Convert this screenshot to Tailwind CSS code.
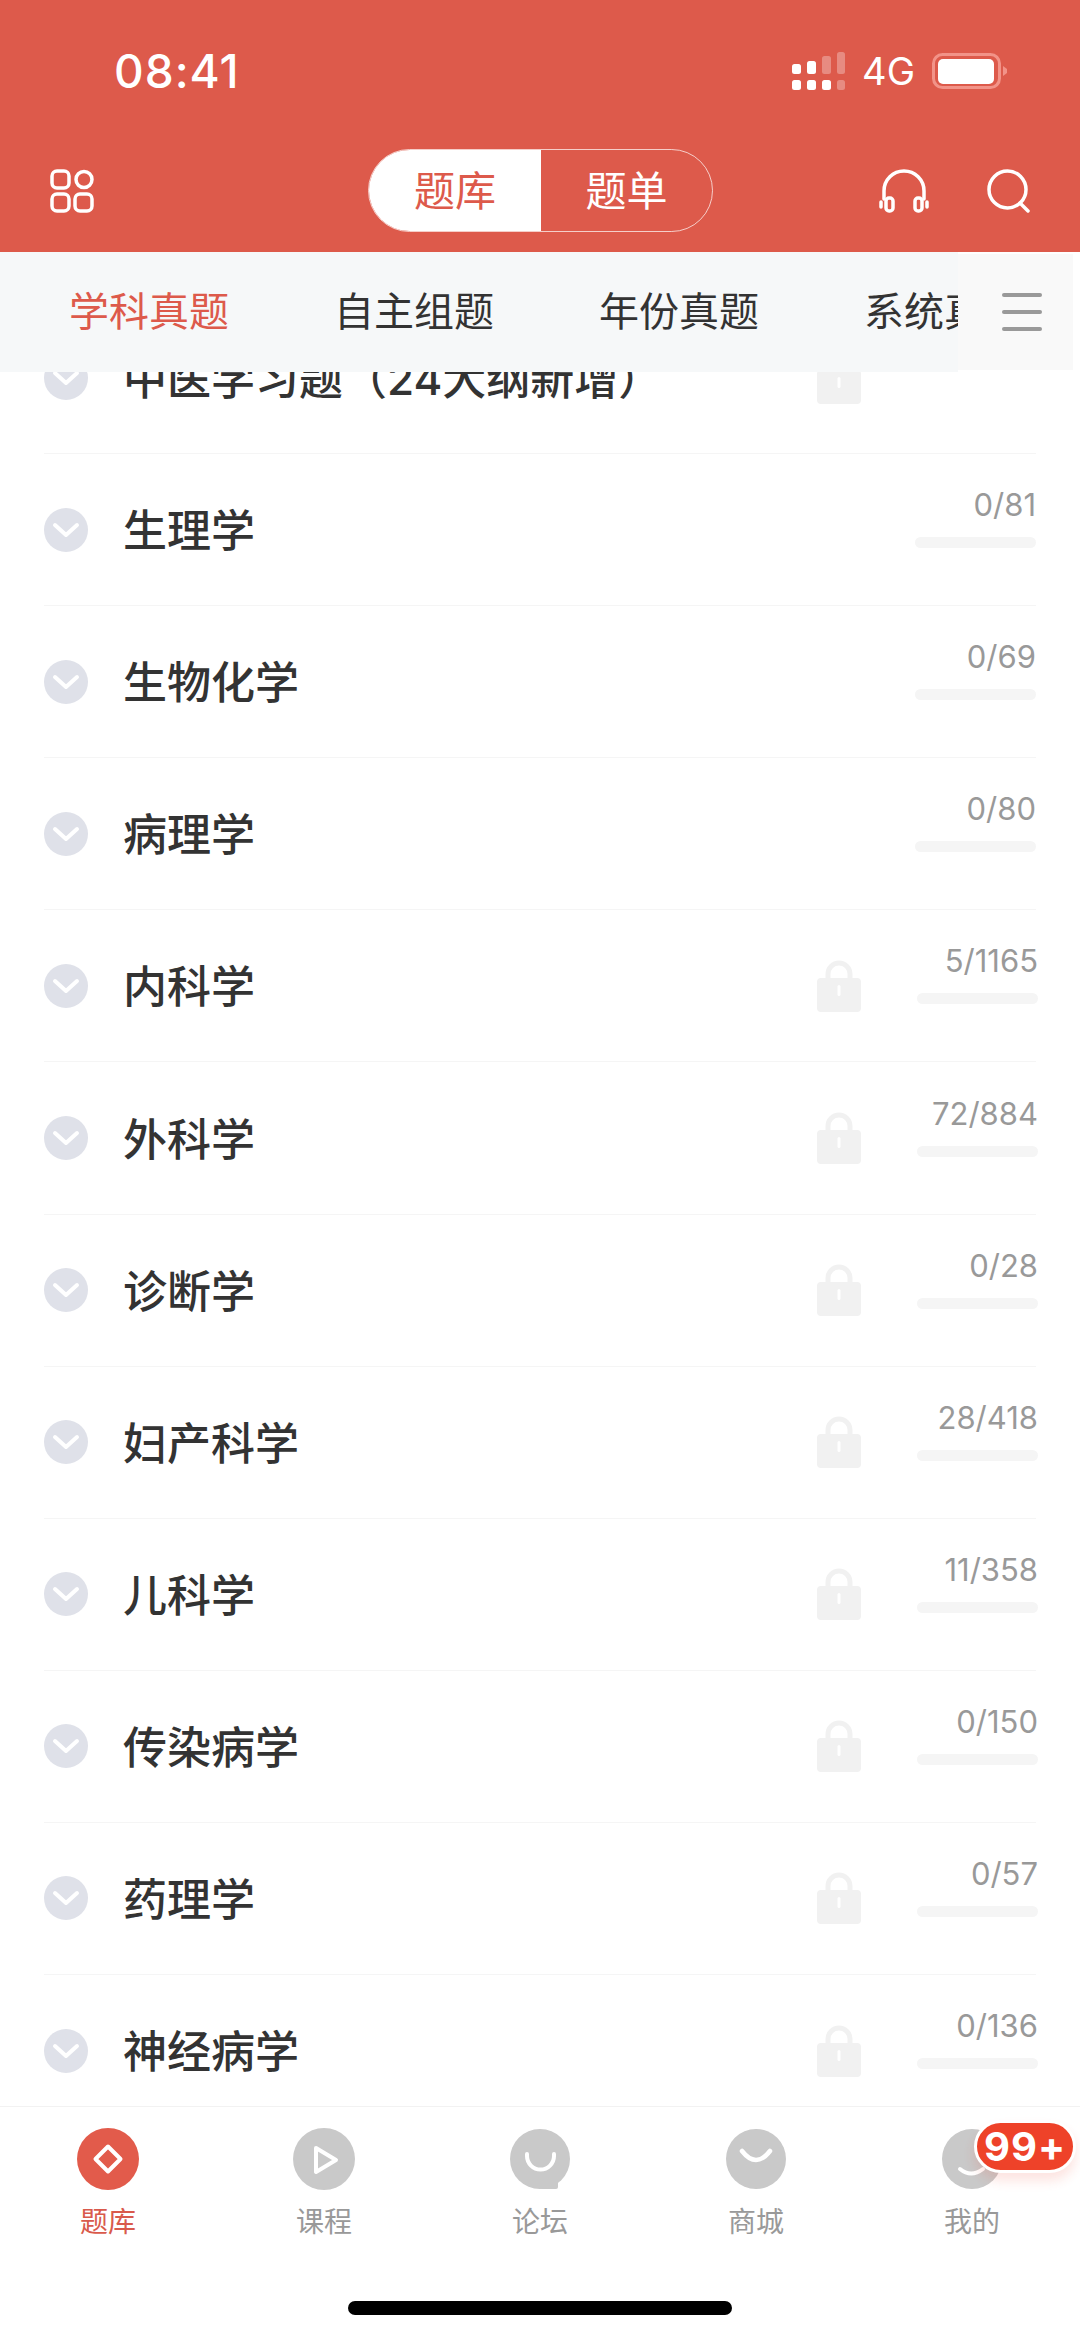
<!DOCTYPE html>
<html lang="zh-CN">
<head>
    <meta charset="UTF-8">
    <meta name="viewport" content="width=device-width, initial-scale=1.0">
    <title>题库</title>
    <script src="https://cdn.jsdelivr.net/npm/@tailwindcss/browser@4"></script>
</head>
<body class="bg-white font-['Inter','Noto_Sans_CJK_SC',sans-serif]">
<div class="relative w-[1080px] h-[2337px] overflow-hidden flex flex-col">

    <!-- Red header -->
    <header class="relative z-20 h-[252px] shrink-0 bg-[#dd5a4b] text-white">
        <div class="pt-[44px] h-[98px] flex justify-between items-center pl-[114px] pr-[73px]">
            <span class="text-[46px] font-medium tracking-[1px] leading-[54px]">08:41</span>
            <div class="flex items-center">
                <svg width="53" height="38" viewBox="0 0 53 38" class="block">
                    <rect x="0" y="12" width="9" height="10" rx="2.5" fill="#fff"/>
                    <rect x="15" y="9" width="9" height="13" rx="2.5" fill="#fff"/>
                    <rect x="30" y="4" width="9" height="18" rx="2.5" fill="#fff" fill-opacity=".3"/>
                    <rect x="45" y="0" width="8" height="22" rx="2.5" fill="#fff" fill-opacity=".3"/>
                    <rect x="0" y="28" width="9" height="10" rx="2.5" fill="#fff"/>
                    <rect x="15" y="28" width="9" height="10" rx="2.5" fill="#fff"/>
                    <rect x="30" y="28" width="9" height="10" rx="2.5" fill="#fff"/>
                    <rect x="45" y="28" width="8" height="10" rx="2.5" fill="#fff" fill-opacity=".3"/>
                </svg>
                <span class="ml-[17px] text-[38px] leading-[40px]">4G</span>
                <svg width="75" height="36" viewBox="0 0 75 36" class="block ml-[17px]">
                    <rect x="1.5" y="1.5" width="66" height="33" rx="9" fill="none" stroke="#f29388" stroke-width="3"/>
                    <rect x="6" y="6" width="56" height="25" rx="5" fill="#fff"/>
                    <path d="M71 13 L75 16 V20 L71 23 Z" fill="#f29388"/>
                </svg>
            </div>
        </div>
        <div class="mt-[51px] flex items-center h-[83px] pl-[50px]">
            <svg width="44" height="44" viewBox="0 0 44 44" fill="none" stroke="#fff" stroke-width="3.5" class="block">
                <rect x="2" y="2" width="17" height="17" rx="5"/>
                <circle cx="34" cy="10.5" r="8"/>
                <rect x="2" y="25" width="17" height="17" rx="5"/>
                <rect x="25" y="25" width="17" height="17" rx="5"/>
            </svg>
            <div class="ml-[274px] w-[345px] h-[83px] rounded-full border border-white/70 overflow-hidden flex text-[41px] leading-none">
                <div class="w-[172px] bg-white text-[#dd5a4b] flex items-center justify-center pt-[2px]">题库</div>
                <div class="flex-1 flex items-center justify-center pt-[2px]">题单</div>
            </div>
            <svg width="50" height="44" viewBox="0 0 50 44" fill="none" stroke="#fff" stroke-width="3.5" stroke-linecap="round" class="block ml-[166px]">
                <path d="M5 30 V22 A20 20 0 0 1 45 22 V30"/>
                <rect x="7" y="29" width="7" height="13" rx="3"/>
                <rect x="36" y="29" width="7" height="13" rx="3"/>
                <path d="M2 33 V38 M48 33 V38"/>
            </svg>
            <svg width="43" height="44" viewBox="0 0 43 44" fill="none" stroke="#fff" stroke-width="3.5" stroke-linecap="round" class="block ml-[58px]">
                <circle cx="20.5" cy="20.5" r="18.5"/>
                <path d="M33 34 L41 42"/>
            </svg>
        </div>
    </header>

    <!-- Category tabs -->
    <nav class="relative z-10 h-[120px] shrink-0 flex">
        <div class="w-[958px] bg-[#f6f8f9] overflow-hidden pl-[69px] flex items-center gap-[105px] text-[40px] text-[#333] whitespace-nowrap">
            <span class="text-[#dd5a4b]">学科真题</span>
            <span>自主组题</span>
            <span>年份真题</span>
            <span>系统真题</span>
        </div>
        <div class="w-[115px] my-[2px] bg-[#f9f9f9] pl-[44px] flex flex-col justify-center gap-[13px]">
            <div class="w-[40px] h-[4px] rounded-full bg-[#999]"></div>
            <div class="w-[40px] h-[4px] rounded-full bg-[#999]"></div>
            <div class="w-[40px] h-[4px] rounded-full bg-[#999]"></div>
        </div>
    </nav>

    <!-- Subject list -->
    <main id="subjectList" class="flex-1 min-h-0 -mt-[70px] ml-[44px] w-[992px]"></main>

    <!-- Bottom tab bar -->
    <footer class="relative z-10 h-[231px] shrink-0 bg-white border-t border-[#f2f2f2] pt-[21px]">
        <div class="grid grid-cols-5 text-[28px] leading-[36px] text-[#999]">
            <div class="flex flex-col items-center text-[#d95a4c]">
                <svg width="62" height="62" viewBox="0 0 62 62" class="block">
                    <circle cx="31" cy="31" r="31" fill="#e25b4b"/>
                    <path d="M31 18.5 L43.5 31 L31 43.5 L18.5 31 Z" fill="none" stroke="#fff" stroke-width="4" stroke-linejoin="round"/>
                </svg>
                <span class="mt-[14px]">题库</span>
            </div>
            <div class="flex flex-col items-center">
                <svg width="62" height="62" viewBox="0 0 62 62" class="block">
                    <circle cx="31" cy="31" r="31" fill="#c9c9c9"/>
                    <path d="M23 20 L43 32 L23 44 Z" fill="none" stroke="#fff" stroke-width="4" stroke-linejoin="round"/>
                </svg>
                <span class="mt-[14px]">课程</span>
            </div>
            <div class="flex flex-col items-center">
                <svg width="62" height="62" viewBox="0 0 62 62" class="block">
                    <circle cx="31" cy="31" r="30" fill="#c9c9c9"/>
                    <rect x="31" y="31" width="18" height="30" rx="2" fill="#c9c9c9"/>
                    <path d="M18 26 V28 A13.5 13.5 0 0 0 45 28 V26" fill="none" stroke="#fff" stroke-width="4" stroke-linecap="round"/>
                </svg>
                <span class="mt-[14px]">论坛</span>
            </div>
            <div class="flex flex-col items-center">
                <svg width="62" height="62" viewBox="0 0 62 62" class="block">
                    <circle cx="31" cy="31" r="30" fill="#c9c9c9"/>
                    <path d="M17 23 Q31 41 45 23" fill="none" stroke="#fff" stroke-width="4.5" stroke-linecap="round"/>
                </svg>
                <span class="mt-[14px]">商城</span>
            </div>
            <div class="flex flex-col items-center">
                <svg width="62" height="62" viewBox="0 0 62 62" class="block">
                    <circle cx="31" cy="31" r="30" fill="#c9c9c9"/>
                    <path d="M19 41 Q30 50 42 41" fill="none" stroke="#fff" stroke-width="4" stroke-linecap="round"/>
                </svg>
                <span class="mt-[14px]">我的</span>
            </div>
        </div>
        <div class="absolute left-[974px] top-[13px] w-[102px] h-[53px] rounded-full border-[3px] border-white bg-[#ee4229] shadow-[0_8px_12px_rgba(238,66,41,0.14)] flex items-center justify-center text-white text-[40px] tracking-[1px] font-bold leading-none">99+</div>
        <div class="mt-[61px] mx-auto w-[384px] h-[14px] rounded-full bg-black"></div>
    </footer>
</div>

<script>
    const subjects = [
        { name: '中医学习题（24大纲新增）', locked: true },
        { name: '生理学', count: '0/81' },
        { name: '生物化学', count: '0/69' },
        { name: '病理学', count: '0/80' },
        { name: '内科学', count: '5/1165', locked: true },
        { name: '外科学', count: '72/884', locked: true },
        { name: '诊断学', count: '0/28', locked: true },
        { name: '妇产科学', count: '28/418', locked: true },
        { name: '儿科学', count: '11/358', locked: true },
        { name: '传染病学', count: '0/150', locked: true },
        { name: '药理学', count: '0/57', locked: true },
        { name: '神经病学', count: '0/136', locked: true }
    ];

    const lockIcon = `
        <svg width="44" height="52" viewBox="0 0 44 52" class="block shrink-0 ml-auto">
            <path d="M11 22 V14 A11 11 0 0 1 33 14 V22" fill="none" stroke="#f1f1f1" stroke-width="5"/>
            <rect x="0" y="18" width="44" height="34" rx="4" fill="#f1f1f1"/>
            <rect x="20.5" y="25" width="3" height="11" rx="1.5" fill="#fff"/>
        </svg>`;

    document.getElementById('subjectList').innerHTML = subjects.map(s => `
        <div class="h-[152.1px] border-b border-[#f5f5f5] flex items-center">
            <div class="w-[44px] h-[44px] rounded-full bg-[#dfe1e9] shrink-0 flex items-center justify-center">
                <svg width="28" height="16" viewBox="0 0 28 16" class="block"><path d="M3 3 L14 13 L25 3" fill="none" stroke="#fff" stroke-width="4" stroke-linecap="round" stroke-linejoin="round"/></svg>
            </div>
            <span class="ml-[35px] pt-[3px] text-[44px] font-medium leading-none text-[#333] whitespace-nowrap">${s.name}</span>
            ${s.locked ? lockIcon : ''}
            ${s.count ? `
            <div class="${s.locked ? 'ml-[56px] -mr-[2px]' : 'ml-auto'} w-[121px] mb-[23px] flex flex-col items-end">
                <span class="text-[31px] leading-[34px] text-[#999]">${s.count}</span>
                <div class="mt-[15px] w-full h-[11px] rounded-full bg-[#f5f5f5]"></div>
            </div>` : '<div class="w-[119px] shrink-0 ml-[56px]"></div>'}
        </div>`).join('');
</script>
</body>
</html>
